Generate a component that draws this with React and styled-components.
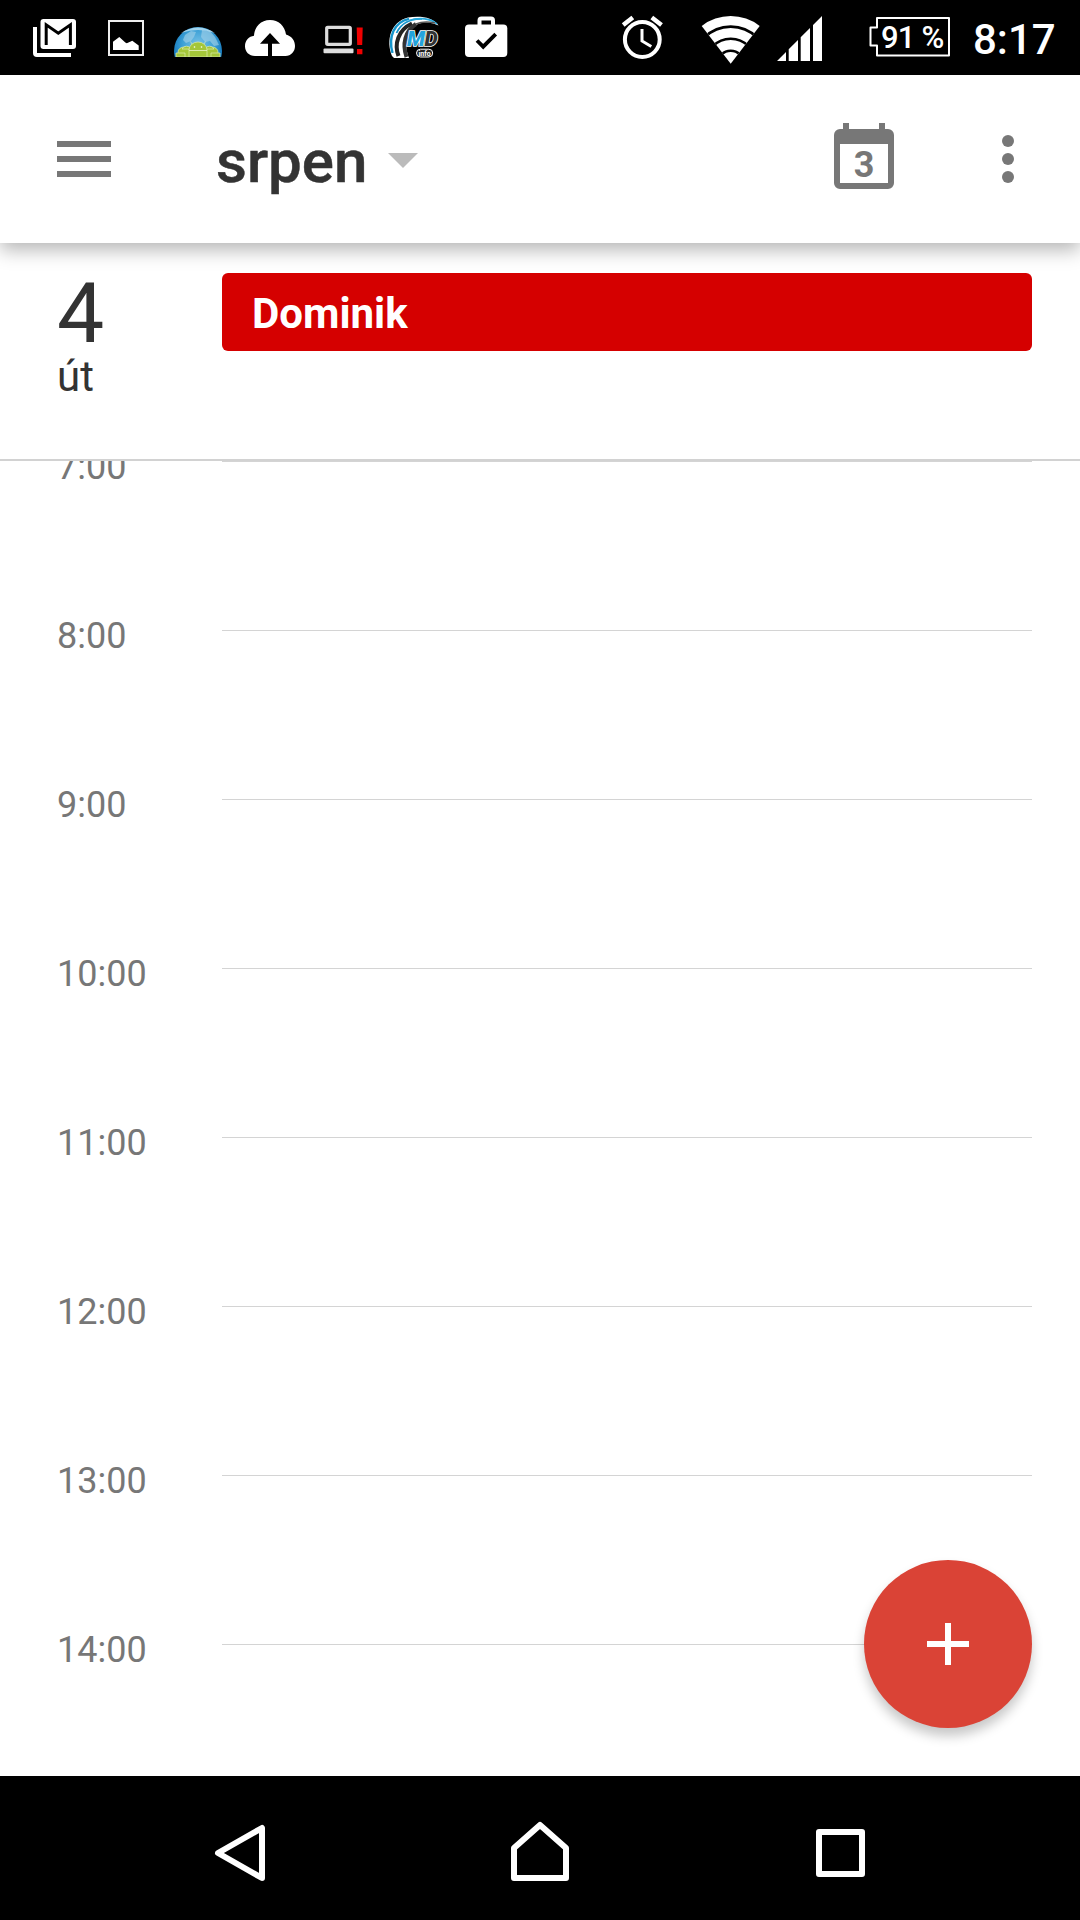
import React from "react";
import styled, { createGlobalStyle } from "styled-components";

const hours = [7, 8, 9, 10, 11, 12, 13, 14];

function GmailIcon() {
  return (
    <StatusIcon viewBox="0 0 72 75">
      <path d="M15 27h4v26h34v4H19q-4 0-4-4z" fill="#fff" />
      <rect x="22.5" y="19" width="35.5" height="30" rx="3" fill="#fff" />
      <path
        d="M28.2 45V24.8L40.3 33.2 52.4 24.8V45"
        fill="none"
        stroke="#000"
        strokeWidth="3"
      />
    </StatusIcon>
  );
}

function PictureIcon() {
  return (
    <StatusIcon viewBox="0 0 72 75">
      <rect x="19" y="21" width="34" height="34" fill="none" stroke="#eee" strokeWidth="2" />
      <path d="M23 41.7l6.3-4.7 6 5.6 1.5.7 5.5-2.5 6.4 4.7V50H23z" fill="#fff" />
    </StatusIcon>
  );
}

function GlobeIcon() {
  return (
    <StatusIcon viewBox="0 0 72 75">
      <defs>
        <radialGradient id="sky" cx="50%" cy="38%" r="60%">
          <stop offset="0" stopColor="#7cc4e8" />
          <stop offset="0.55" stopColor="#3a9fd6" />
          <stop offset="1" stopColor="#0b6db5" />
        </radialGradient>
        <clipPath id="horizon">
          <rect x="10" y="24" width="52" height="33" />
        </clipPath>
      </defs>
      <g clipPath="url(#horizon)">
        <circle cx="36" cy="51" r="24" fill="url(#sky)" />
        <path
          d="M23 35l6-4 5 1-2 5-3 4-5 2-3-3zM40 30l8 1 5 6 4 8-5 1-4-5-5 1-4-5z"
          fill="#9fd0e8"
          opacity="0.65"
        />
        <path d="M19 33Q36 22 53 33Q36 27 19 33z" fill="#cdeaf7" opacity="0.7" />
        <g fill="#a4c639" stroke="#dcebb0" strokeWidth="0.7">
          <path d="M16 52a6 5 0 0 1 12 0v5H16zM44 52a6 5 0 0 1 12 0v5H44z" />
          <path d="M20 49a5 5 0 0 1 9 0zM43 49a5 5 0 0 1 9 0z" />
          <path d="M14 57v-4h9v4zM49 53h9v4h-9z" />
          <path d="M27 50a9 8 0 0 1 18 0v7H27z" />
          <path d="M30 44l-1.5-2.5M42 44l1.5-2.5" />
        </g>
        <path d="M27 50.5h18" stroke="#e8f3c8" strokeWidth="0.8" />
        <circle cx="32.5" cy="47" r="0.8" fill="#fff" />
        <circle cx="39.5" cy="47" r="0.8" fill="#fff" />
      </g>
    </StatusIcon>
  );
}

function CloudIcon() {
  return (
    <StatusIcon viewBox="0 0 72 75">
      <path
        d="M21 56C15 56 11 51.5 11 46.2C11 40.5 15 36.4 20 35.8C20.5 26.5 27 20 36 20C44.5 20 51 26 52 34.5C57.5 36 61 40.5 61 46C61 51.5 57 56 51.5 56H38V43.7H46L36 33L26 43.7H34V56z"
        fill="#fff"
      />
    </StatusIcon>
  );
}

function ComputerIcon() {
  return (
    <StatusIcon viewBox="0 0 72 75">
      <rect x="20.7" y="27.3" width="23.6" height="17" rx="1" fill="#000" stroke="#ddd" strokeWidth="3.2" />
      <rect x="17.5" y="48.5" width="30" height="4.8" rx="1" fill="#ddd" />
      <path d="M50.7 27.5h6l-.5 17.5h-5zM51 49h5.400v5.200H51z" fill="#f00000" />
    </StatusIcon>
  );
}

function RoadIcon() {
  return (
    <StatusIcon viewBox="0 0 72 75">
      <path
        d="M14 56C8 41 12 22 30 17.5C42 15.5 55 17 60.5 25.5C50 20.5 39 22 33 29C27 37 27 48 31 58L16 58z"
        fill="#fff"
      />
      <g fill="none">
        <path d="M14.5 53C10 37 16 22 31 18.8" stroke="#1595cc" strokeWidth="2.4" />
        <path d="M18.5 33C23 23 33 18.5 44 18.8" stroke="#1595cc" strokeWidth="1.8" />
        <path d="M31 20.5C42 17 53 18.5 59 24" stroke="#29a9dc" strokeWidth="1.6" />
        <path d="M20.5 56C16 44 20 30 34 23.5" stroke="#222" strokeWidth="4" />
        <path d="M28.5 57C24 44 27 31 38 24" stroke="#333" strokeWidth="4" />
        <path d="M38 24Q46 20.500 57 23" stroke="#555" strokeWidth="1.5" />
      </g>
      <LogoText x="29" y="46" fontSize="21" textLength="18.5" fill="#24a3dc">
        M
      </LogoText>
      <LogoText x="46.5" y="46" fontSize="21" textLength="14" fill="#333">
        D
      </LogoText>
      <rect x="38.5" y="49.2" width="16.2" height="7.8" rx="3.9" fill="#222" stroke="#fff" />
      <InfoText x="46.6" y="55.5">
        info
      </InfoText>
    </StatusIcon>
  );
}

function BagIcon() {
  return (
    <StatusIcon viewBox="0 0 72 75">
      <path d="M29.5 26V20.5q0-2 2-2h9.500q2 0 2 2V26" fill="none" stroke="#fff" strokeWidth="4" />
      <rect x="15" y="24.5" width="42.3" height="32.5" rx="4" fill="#fff" />
      <path d="M27 40.5l6.2 6.2 12.5-12.5" fill="none" stroke="#000" strokeWidth="3.8" />
    </StatusIcon>
  );
}

function AlarmIcon() {
  return (
    <StatusIcon viewBox="0 0 72 75">
      <g fill="none" stroke="#fff">
        <circle cx="36.3" cy="39.5" r="17.4" strokeWidth="4" />
        <path d="M36 29v12l9.3 5.5" strokeWidth="3" />
        <path d="M17.2 25l9.6-7.5M55.5 25l-9.7-7.5" strokeWidth="4.5" />
      </g>
    </StatusIcon>
  );
}

function WifiIcon() {
  return (
    <StatusIcon viewBox="0 0 72 75">
      <defs>
        <clipPath id="fan">
          <path d="M34.7 63.8L5.7 25.9A47.6 47.6 0 0 1 63.7 25.9z" />
        </clipPath>
      </defs>
      <g clipPath="url(#fan)" fill="none" stroke="#000" strokeWidth="2.6">
        <rect width="72" height="75" fill="#fff" stroke="none" />
        <circle cx="34.7" cy="63.8" r="37.2" />
        <circle cx="34.7" cy="63.8" r="25" />
        <circle cx="34.7" cy="63.8" r="13" />
      </g>
    </StatusIcon>
  );
}

function SignalIcon() {
  return (
    <StatusIcon viewBox="0 0 72 75">
      <path
        d="M9 61L18 52V61zM20.7 49.3L30 40V61H20.7zM32.7 37.3L42 28V61H32.7zM45 25L54 16V61H45z"
        fill="#fff"
      />
    </StatusIcon>
  );
}

export default function App() {
  return (
    <Screen>
      <GlobalStyle />
      <StatusBar>
        <GmailIcon />
        <PictureIcon />
        <GlobeIcon />
        <CloudIcon />
        <ComputerIcon />
        <RoadIcon />
        <BagIcon />
        <SystemIcons>
          <AlarmIcon />
          <Spacer $width={18} />
          <WifiIcon />
          <SignalIcon />
          <Battery>
            <BatteryOutline viewBox="0 0 82 42">
              <path
                d="M8 2H80V39.5H8V29.5H1.5V11.5H8z"
                fill="none"
                stroke="#fff"
                strokeWidth="2"
                strokeLinejoin="round"
              />
            </BatteryOutline>
            <BatteryLevel>91 %</BatteryLevel>
          </Battery>
          <Clock>8:17</Clock>
        </SystemIcons>
      </StatusBar>

      <Toolbar>
        <MenuButton>
          <MenuBar />
          <MenuBar />
          <MenuBar />
        </MenuButton>
        <Month>srpen</Month>
        <Arrow />
        <Today viewBox="0 0 60 66">
          <path
            d="M9 0h6v6h30V0h6v6h3a6 6 0 0 1 6 6v48a6 6 0 0 1-6 6H6a6 6 0 0 1-6-6V12a6 6 0 0 1 6-6h3zM6 21v39h48V21z"
            fill="#777"
            fillRule="evenodd"
          />
          <TodayText x="30" y="54">
            3
          </TodayText>
        </Today>
        <More>
          <Dot />
          <Dot />
          <Dot />
        </More>
      </Toolbar>

      <DayHeader>
        <DayColumn>
          <DayNumber>4</DayNumber>
          <DayName>út</DayName>
        </DayColumn>
        <Event>Dominik</Event>
      </DayHeader>

      <Timeline>
        {hours.map((hour) => (
          <HourRow key={hour}>
            <HourLabel>{hour}:00</HourLabel>
            <HourLine />
          </HourRow>
        ))}
        <AddButton>
          <svg width="42" height="42" viewBox="0 0 42 42">
            <path d="M18 0h6v18h18v6H24v18h-6V24H0v-6h18z" fill="#fff" />
          </svg>
        </AddButton>
      </Timeline>

      <NavBar>
        <NavIcon viewBox="0 0 300 144">
          <path d="M128 77L172 52V102z" />
        </NavIcon>
        <NavIcon viewBox="0 0 300 144">
          <path d="M124 102V72L150 49L176 72V102z" />
        </NavIcon>
        <NavIcon viewBox="0 0 300 144">
          <path d="M129 56H172V98H129z" />
        </NavIcon>
      </NavBar>
    </Screen>
  );
}

const GlobalStyle = createGlobalStyle`
  body {
    margin: 0;
    background: #fff;
  }
`;
const Screen = styled.div`
  display: flex;
  flex-direction: column;
  width: 1080px;
  height: 1920px;
  overflow: hidden;
  background: #fff;
  font-family: Roboto, sans-serif;
  color: #333;
`;
const StatusBar = styled.div`
  display: flex;
  flex-shrink: 0;
  height: 75px;
  padding-left: 18px;
  background: #000;
  color: #fff;
`;
const StatusIcon = styled.svg`
  flex-shrink: 0;
  width: 72px;
  height: 75px;
`;
const LogoText = styled.text`
  font-family: Roboto, sans-serif;
  font-weight: 900;
  font-style: italic;
  stroke: #fff;
  stroke-width: 1.6px;
  paint-order: stroke;
`;
const InfoText = styled.text`
  font-family: Roboto, sans-serif;
  font-size: 7px;
  font-weight: 700;
  text-anchor: middle;
  fill: #fff;
`;
const SystemIcons = styled.div`
  display: flex;
  margin-left: auto;
  width: 474px;
`;
const Spacer = styled.div`
  width: ${(props) => props.$width}px;
`;
const Battery = styled.div`
  display: grid;
  width: 82px;
  height: 42px;
  margin: 16px 0 0 29px;
`;
const BatteryOutline = styled.svg`
  grid-area: 1 / 1;
  width: 82px;
  height: 42px;
`;
const BatteryLevel = styled.span`
  grid-area: 1 / 1;
  padding-left: 12px;
  font-size: 31px;
  font-weight: 500;
  line-height: 43px;
  letter-spacing: -0.8px;
  white-space: nowrap;
`;
const Clock = styled.span`
  margin-left: 22px;
  font-size: 42px;
  font-weight: 500;
  line-height: 80px;
`;
const Toolbar = styled.header`
  display: flex;
  flex-shrink: 0;
  align-items: flex-start;
  height: 168px;
  padding-left: 57px;
  box-sizing: border-box;
  background: #fff;
  box-shadow: 0 7px 18px rgba(0, 0, 0, 0.29);
  z-index: 1;
`;
const MenuButton = styled.div`
  display: flex;
  flex-direction: column;
  gap: 9px;
  width: 54px;
  margin-top: 66px;
`;
const MenuBar = styled.span`
  height: 6px;
  background: #777;
`;
const Month = styled.h1`
  width: 172px;
  margin: 52px 0 0 105px;
  font-size: 60px;
  font-weight: 500;
  line-height: 70px;
  -webkit-text-stroke: 0.5px #333;
`;
const Arrow = styled.span`
  margin-top: 78px;
  border: 15px solid transparent;
  border-top-color: #bbb;
  border-bottom: 0;
`;
const Today = styled.svg`
  width: 60px;
  height: 66px;
  margin: 48px 0 0 416px;
`;
const TodayText = styled.text`
  font-family: Roboto, sans-serif;
  font-size: 36px;
  font-weight: 700;
  text-anchor: middle;
  fill: #777;
`;
const More = styled.div`
  display: flex;
  flex-direction: column;
  gap: 6px;
  margin: 60px 0 0 108px;
`;
const Dot = styled.span`
  width: 12px;
  height: 12px;
  border-radius: 50%;
  background: #777;
`;
const DayHeader = styled.section`
  display: flex;
  flex-shrink: 0;
  height: 218px;
  padding: 30px 48px 0 57px;
  box-sizing: border-box;
  border-bottom: 2px solid #d2d2d2;
`;
const DayColumn = styled.div`
  width: 165px;
`;
const DayNumber = styled.div`
  font-size: 84px;
  line-height: 82px;
`;
const DayName = styled.div`
  font-size: 42px;
  line-height: 44px;
`;
const Event = styled.div`
  flex: 1;
  height: 78px;
  padding-left: 30px;
  border-radius: 6px;
  box-sizing: border-box;
  background: #d50000;
  color: #fff;
  font-size: 42px;
  font-weight: 700;
  line-height: 82px;
`;
const Timeline = styled.main`
  position: relative;
  flex: 1;
  overflow: hidden;
`;
const HourRow = styled.div`
  display: flex;
  height: 169px;
  padding: 0 48px 0 57px;
`;
const HourLabel = styled.span`
  width: 165px;
  margin-top: -15px;
  color: #777;
  font-size: 36px;
  line-height: 42px;
`;
const HourLine = styled.span`
  flex: 1;
  height: 1px;
  background: #d4d4d4;
`;
// floats over the hour grid
const AddButton = styled.button`
  position: absolute;
  right: 48px;
  bottom: 48px;
  display: flex;
  align-items: center;
  justify-content: center;
  width: 168px;
  height: 168px;
  padding: 0;
  border: 0;
  border-radius: 50%;
  background: #da4336;
  box-shadow: 0 8px 12px rgba(0, 0, 0, 0.22);
`;
const NavBar = styled.nav`
  display: flex;
  flex-shrink: 0;
  height: 144px;
  padding: 0 90px;
  background: #000;
`;
const NavIcon = styled.svg`
  width: 300px;
  height: 144px;
  fill: none;
  stroke: #fff;
  stroke-width: 6px;
  stroke-linejoin: round;
`;
